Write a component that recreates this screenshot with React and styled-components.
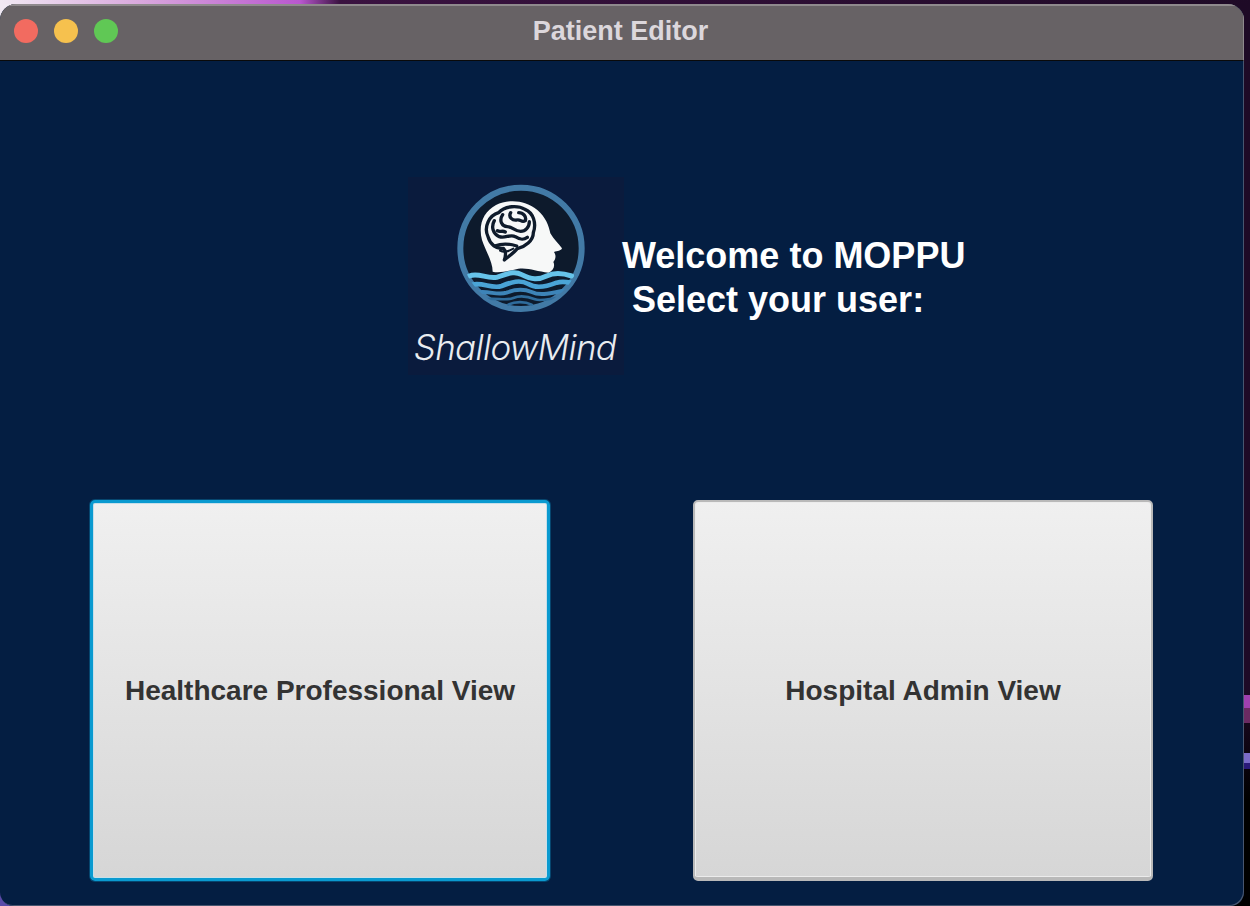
import styled, { createGlobalStyle } from "styled-components";

const GlobalStyle = createGlobalStyle`
  html, body {
    margin: 0;
    padding: 0;
    background: #000;
  }
`;

/* what shows around the window: wallpaper strip on top, dark desktop on the right */
const Desktop = styled.div`
  width: 1250px;
  height: 906px;
  box-sizing: border-box;
  padding: 4px 6px 0 0;
  overflow: hidden;
  background:
    linear-gradient(90deg, transparent 1244px, #a040b0 1244px) 0 695px / 100% 13px no-repeat,
    linear-gradient(90deg, transparent 1244px, #6a2a62 1244px) 0 708px / 100% 15px no-repeat,
    linear-gradient(90deg, transparent 1244px, #7a6cc8 1244px) 0 753px / 100% 10px no-repeat,
    linear-gradient(90deg, transparent 1244px, #2a1a78 1244px) 0 763px / 100% 6px no-repeat,
    linear-gradient(90deg, #f1e9f3 0, #d9a8dd 140px, #b957cf 300px, #3a1240 340px, #1e0a26 1250px) 0 0 / 100% 4px no-repeat,
    linear-gradient(#f1e9f3, #f1e9f3) 0 0 / 16px 24px no-repeat,
    linear-gradient(#5a4aa8, #5a4aa8) 0 884px / 16px 22px no-repeat,
    linear-gradient(180deg, #1e0a26 0, #1e0a26 690px, #000 800px);
`;

const Window = styled.div`
  height: 100%;
  display: flex;
  flex-direction: column;
  border-radius: 16px 16px 14px 14px;
  overflow: hidden;
  background: #041e42;
  box-shadow: inset -1px -1px 0 #47566f;
`;

const TitleBar = styled.div`
  position: relative;
  flex: 0 0 57px;
  box-sizing: border-box;
  padding-bottom: 4px;
  display: flex;
  align-items: center;
  justify-content: center;
  background: #676265;
  border-top: 2px solid #8f8a8d;
  border-right: 1px solid #8f8a8d;
  border-bottom: 1px solid #0a0a0a;
`;

const Lights = styled.div`
  position: absolute;
  left: 14px;
  top: 13px;
  display: flex;
  gap: 16px;
`;

const Light = styled.span`
  width: 24px;
  height: 24px;
  border-radius: 50%;
  background: ${(p) => p.$color};
`;

const Title = styled.div`
  margin-left: -2px;
  font: bold 27px "Liberation Sans", Arial, sans-serif;
  color: #dcd7dc;
`;

const Content = styled.div`
  flex: 1;
  display: flex;
  flex-direction: column;
`;

const Hero = styled.div`
  display: flex;
  align-items: center;
  padding: 116px 0 0 408px;
`;

const LogoBox = styled.div`
  width: 216px;
  height: 198px;
  display: flex;
  flex-direction: column;
  align-items: center;
  background: #0a1b3d;
`;

const LogoMark = styled.svg`
  width: 140px;
  height: 135px;
  margin: 3px 0 0 8px;
  flex: none;
`;

const LogoName = styled.div`
  margin: 10px 2px 0 0;
  font: italic 300 35px Inter, sans-serif;
  letter-spacing: -0.7px;
  line-height: 44px;
  color: #e9ecf0;
`;

const Welcome = styled.div`
  margin: 3px 0 0 -2px;
  font: bold 36px/44px "Liberation Sans", Arial, sans-serif;
  color: #fff;
  white-space: pre;
`;

const Choices = styled.div`
  display: grid;
  grid-template-columns: 460px 460px;
  column-gap: 143px;
  padding: 125px 0 0 90px;
`;

const ChoiceButton = styled.button`
  height: 381px;
  padding: ${(p) => (p.$focused ? "0" : "2px 0 0")};
  box-sizing: border-box;
  border-radius: 5px;
  font: bold 28px "Liberation Sans", Arial, sans-serif;
  color: #333;
  background: linear-gradient(180deg, #f0f0f0, #d6d6d6);
  border: ${(p) => (p.$focused ? "3px solid #0a9ad0" : "2px solid #b9b9b9")};
  border-bottom-width: ${(p) => (p.$focused ? "3px" : "4px")};
  box-shadow: ${(p) =>
    p.$focused
      ? "inset 0 0 0 1px #c6dfe9, 0 0 0 1px rgba(10, 130, 180, 0.4)"
      : "inset 0 0 0 1px #ececec"};
`;

const Logo = () => (
  <LogoMark viewBox="0 0 420 405">
    <defs>
      <clipPath id="disc">
        <circle cx="213" cy="205" r="180" />
      </clipPath>
    </defs>
    <circle cx="213" cy="205" r="182" fill="#0d1a2c" stroke="#427aa6" strokeWidth="18" />
    <path
      d="M128 275 C128 245 108 215 96 180 C84 135 100 95 138 75 C175 56 228 60 262 90 C287 112 296 135 301 160 C311 178 326 190 336 205 C333 213 322 213 312 216 C320 228 316 238 310 246 C316 258 310 272 296 278 C260 274 235 262 205 266 C175 272 150 280 128 275 Z"
      fill="#f7f8f8"
    />
    <g fill="none" stroke="#0f1b2b" strokeWidth="10" strokeLinecap="round" strokeLinejoin="round">
      <path d="M114 170 C100 140 118 106 146 98 C165 76 205 76 225 88 C250 98 260 130 250 158 C250 182 225 200 202 206 C190 220 175 230 163 240 C168 225 168 212 160 205 C138 208 120 192 114 170 Z" />
      <path d="M133 122 C123 140 128 160 148 170 C165 176 180 162 196 170 C208 178 218 182 232 172" />
      <path d="M158 104 C146 122 156 140 172 140 C188 140 194 154 212 154 C226 154 238 142 238 125" />
      <path d="M182 98 C174 112 188 122 200 120 C212 116 214 130 226 122 C230 110 220 98 206 98" />
      <path d="M134 198 C155 190 182 192 200 198" />
      <path d="M142 152 C150 158 156 150 166 156" />
      <path d="M150 212 C165 220 178 212 190 206" strokeWidth="6" />
    </g>
    <g clipPath="url(#disc)" fill="none" strokeLinecap="round">
      <path d="M58 288 C85 276 110 298 140 292 C170 284 190 270 215 284 C245 300 265 300 290 288 C315 276 340 280 365 288" stroke="#66c3ea" strokeWidth="15" />
      <path d="M66 314 C100 306 125 328 155 318 C185 306 210 298 235 312 C260 328 295 318 320 308 C335 304 350 306 362 308" stroke="#4aa4d6" strokeWidth="14" />
      <path d="M80 338 C115 330 140 348 170 338 C195 328 220 326 245 336 C270 348 300 340 340 332" stroke="#3d84b8" strokeWidth="12" />
      <path d="M105 358 C140 352 165 364 190 354 C210 346 235 350 255 358 C270 364 290 358 318 354" stroke="#2f6c9c" strokeWidth="8" />
      <path d="M175 374 C195 364 225 364 245 374" stroke="#2f6c9c" strokeWidth="8" />
    </g>
  </LogoMark>
);

const App = () => {
  return (
    <>
      <GlobalStyle />
      <Desktop>
        <Window>
          <TitleBar>
            <Lights>
              <Light $color="#f26b60" />
              <Light $color="#f6c14e" />
              <Light $color="#60c855" />
            </Lights>
            <Title>Patient Editor</Title>
          </TitleBar>
          <Content>
            <Hero>
              <LogoBox>
                <Logo />
                <LogoName>ShallowMind</LogoName>
              </LogoBox>
              <Welcome>{"Welcome to MOPPU\n Select your user:"}</Welcome>
            </Hero>
            <Choices>
              <ChoiceButton $focused>Healthcare Professional View</ChoiceButton>
              <ChoiceButton>Hospital Admin View</ChoiceButton>
            </Choices>
          </Content>
        </Window>
      </Desktop>
    </>
  );
};

export default App;
